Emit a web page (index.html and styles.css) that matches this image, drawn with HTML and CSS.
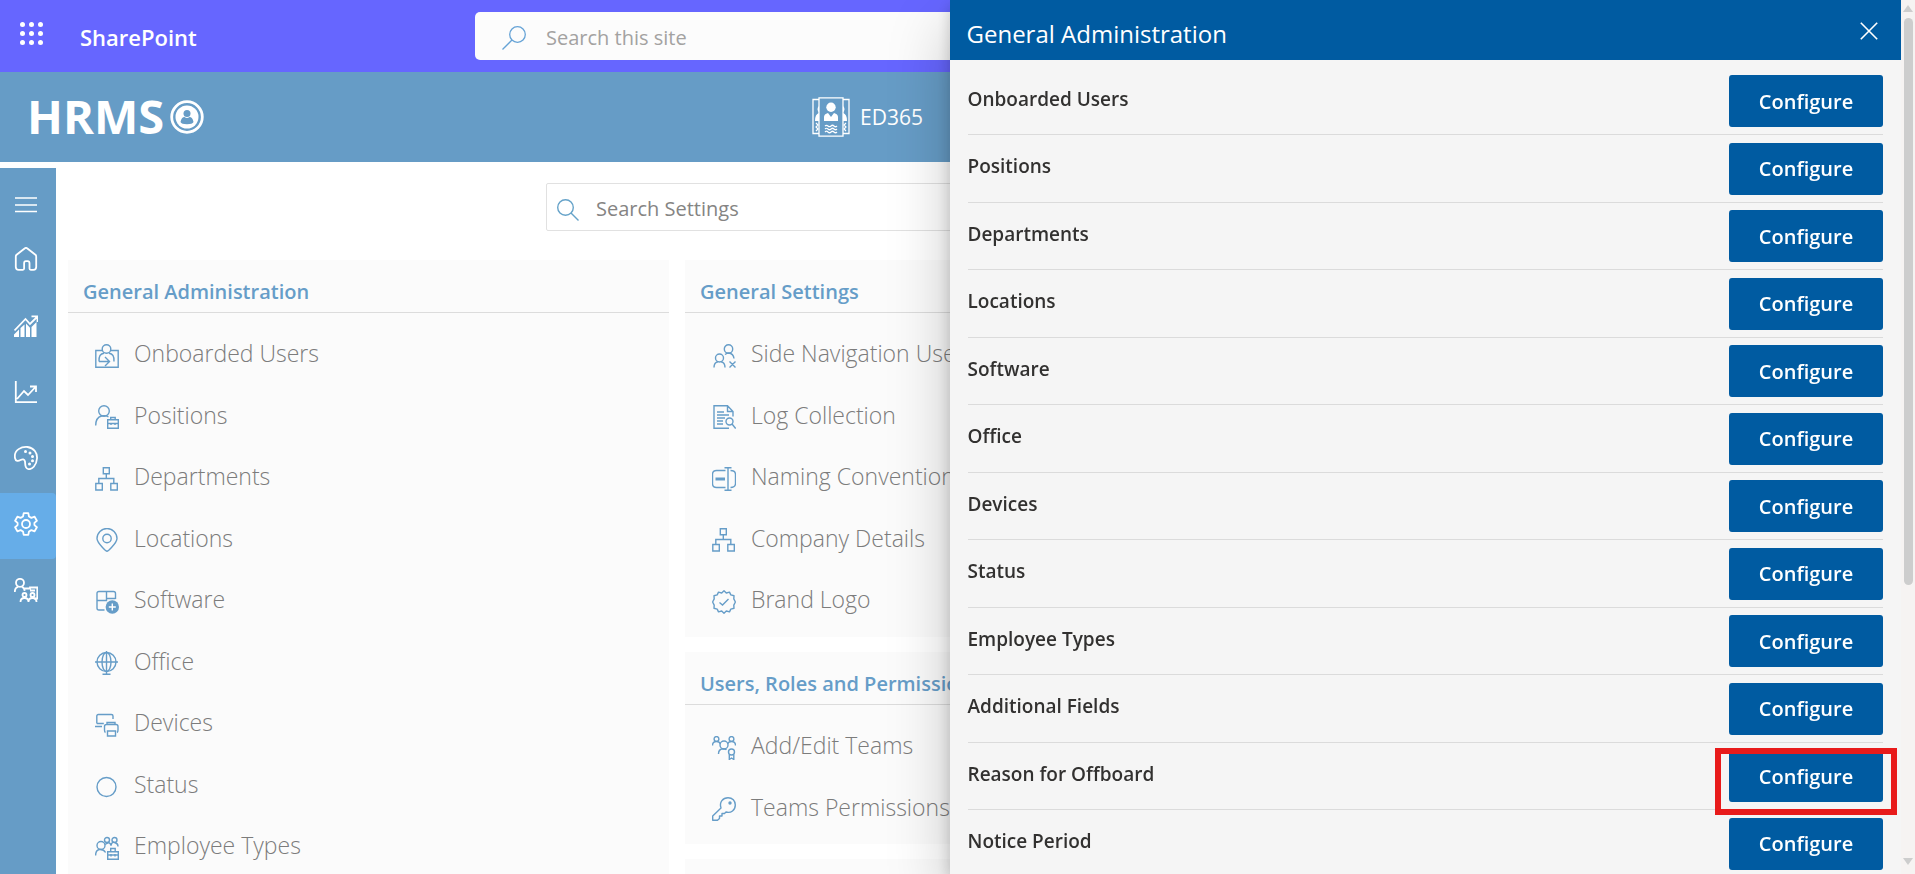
FILE: index.html
```html
<!DOCTYPE html>
<html lang="en">
<head>
<meta charset="utf-8">
<title>HRMS - Settings</title>
<link rel="stylesheet" href="styles.css">
</head>
<body>
<div class="page">
  <header class="suite-bar">
    <button class="waffle" aria-label="App launcher">
      <svg viewBox="0 0 24 24" width="24" height="24" fill="currentColor"><circle cx="2.5" cy="2.5" r="2.5"/><circle cx="11.5" cy="2.5" r="2.5"/><circle cx="20.5" cy="2.5" r="2.5"/><circle cx="2.5" cy="11.5" r="2.5"/><circle cx="11.5" cy="11.5" r="2.5"/><circle cx="20.5" cy="11.5" r="2.5"/><circle cx="2.5" cy="20.5" r="2.5"/><circle cx="11.5" cy="20.5" r="2.5"/><circle cx="20.5" cy="20.5" r="2.5"/></svg>
    </button>
    <a class="suite-name" href="#">SharePoint</a>
    <label class="suite-search">
      <svg viewBox="0 0 24 24" width="24" height="24" fill="none" stroke="currentColor" stroke-width="1.3"><circle cx="15.5" cy="8.5" r="7.8"/><path d="M10 14 .5 23.500"/></svg>
      <input type="text" placeholder="Search this site" aria-label="Search this site">
    </label>
  </header>

  <div class="app-bar">
    <a class="brand" href="#"><span>HRMS</span>
      <svg viewBox="0 0 34 34" width="34" height="34"><circle cx="17" cy="17" r="15.3" fill="none" stroke="#fff" stroke-width="2.8"/><circle cx="17" cy="17" r="11.5" fill="#fff"/><circle cx="17" cy="13.5" r="3.5" fill="#669cc6"/><path d="M10.500 22q1-5 4-5 2.500 1.800 5 0 3 0 4 5-1 2.200-6.500 2.200T10.500 22z" fill="#669cc6"/></svg>
    </a>
    <a class="app-link" href="#">
      <svg viewBox="0 0 38 40" width="38" height="40" fill="none" stroke="#fff" stroke-width="1.3"><path d="M7 2.500H1v34h6M31 2.500h6v34h-6M7 .8h24v38.400H7z"/><g fill="#fff" stroke="none"><circle cx="19" cy="10.3" r="4.7"/><path d="M12 24v-4q0-3 4-4l3 4 3-4q4 1 4 4v4zM7 9q-3 3 0 6.500zM7 16q-4 1-4 8h4zM31 9q3 3 0 6.500zM31 16q4 1 4 8h-4z"/></g><path d="M13 29q1.500-1.500 3 0t3 0 3 0 3 0M13 32q1.500-1.500 3 0t3 0 3 0 3 0M13 35q1.500-1.500 3 0t3 0 3 0 3 0M4 26l2 2-2 2 2 2-2 2M34 26l-2 2 2 2-2 2 2 2" stroke-width="1.2"/></svg>
      <span>ED365</span>
    </a>
  </div>

  <div class="body">
    <nav class="rail" aria-label="Main">
      <button class="rail-item rail-menu" aria-label="Menu"><svg viewBox="0 0 24 24"><path d="M1 5h22M1 12h22M1 18.500h22" stroke-width="1.3"/></svg></button>
      <button class="rail-item rail-home" aria-label="Home"><svg viewBox="0 0 24 24"><path d="M1.800 9.500q0-1 .8-1.700L10.600 1.500q1.400-1.200 2.800 0l8 6.300q.8.700.8 1.700V20q0 2.800-2.800 2.800h-2.700q-1.200 0-1.200-1.200v-5.400q0-2-1.800-2h-1.800q-1.800 0-1.800 2v5.400q0 1.200-1.200 1.200H4.600Q1.800 22.800 1.800 20z"/></svg></button>
      <button class="rail-item rail-stats" aria-label="Analytics"><svg viewBox="0 0 24 24"><path d="M.5 15.500 11.500 4l4.500 5L23 2M17.500 1.300H23.500V7"/><path d="M0 22v-2.500l5-5V22zM6.500 22v-9L10.500 9.500V22zM12 22V8.500l4 4.200V22zM17.500 22V12L22.500 7v15z" fill="currentColor" stroke="none"/></svg></button>
      <button class="rail-item" aria-label="Reports"><svg viewBox="0 0 24 24"><path d="M1.800 1v21.200H23M3 19l7-8 4 4 7.500-8M16 6.500h6v5.500"/></svg></button>
      <button class="rail-item" aria-label="Theme"><svg viewBox="0 0 24 24"><path d="M1 12C-.5 3.500 8 .5 13.500 1 20 1.800 23.500 7 23 12.500 22.500 19.500 18 24 14 23c-3.500-1-2.500-4.500-3-7.500-.5-2.500-2.500-2.500-4.500-1.500C4.500 15.200 1.500 15.500 1 12z"/><g fill="currentColor" stroke="none"><circle cx="11.5" cy="5.5" r="1.5"/><circle cx="16" cy="7" r="1.5"/><circle cx="18.5" cy="10.5" r="1.5"/><circle cx="18.5" cy="14.8" r="1.5"/><circle cx="15.5" cy="18" r="1.5"/></g></svg></button>
      <button class="rail-item active" aria-label="Settings" aria-current="page"><svg viewBox="0 0 24 24"><circle cx="12" cy="12" r="4"/><path d="M9.700 1.200h4.600l.7 3.300 2.400 1.400 3.200-1.200 2.300 4-2.500 2.200v2.200l2.500 2.200-2.300 4-3.200-1.200-2.400 1.400-.7 3.300H9.700L9 19.500l-2.400-1.400-3.200 1.200-2.300-4 2.500-2.200v-2.200L1.100 8.700l2.300-4 3.200 1.200L9 4.500z" stroke-linejoin="round"/></svg></button>
      <button class="rail-item" aria-label="Teams"><svg viewBox="0 0 24 24"><circle cx="6" cy="4.800" r="4"/><path d="M.8 14q0-4.500 3.500-5.200M7.700 8.800q2.500.7 3 4M10 10.500h6v-1h7.300V20.500h-3M16 12.500h5"/><circle cx="10.5" cy="17" r="2"/><circle cx="18.5" cy="17" r="2"/><path d="M6.500 24q0-4 4-4t4 4q0-4 4-4t4 4"/></svg></button>
    </nav>

    <main class="main">
      <label class="settings-search">
        <svg viewBox="0 0 22 22" width="22" height="22" fill="none" stroke="currentColor" stroke-width="1.4"><circle cx="8.5" cy="8.5" r="7.8"/><path d="m14 14 7.500 7.500"/></svg>
        <input type="text" placeholder="Search Settings" aria-label="Search Settings">
      </label>
      <div class="columns">
        <div class="column">
          <section class="card">
            <h2>General Administration</h2>
            <ul>
              <li><a href="#"><svg viewBox="0 0 24 24"><path d="M7 6.500H.8v16.800h22.400V6.500H16"/><circle cx="11.5" cy="5" r="4.3"/><path d="M4 17.500q-.5-7.800 5-8.300M14 9.200q5.500.5 5 8.300M4 17.500h9.500M10 13l4.500 4.500L10 22"/></svg>Onboarded Users</a></li>
              <li><a href="#"><svg viewBox="0 0 24 24"><circle cx="9" cy="6" r="5.3"/><path d="M.7 20.500Q.7 12.500 6.500 11q4-1 7 1M12.700 14.700h10.600v8.600H12.700zM15.700 14.500v-2h4.500v2M12.700 18.500h10.600M16 18v2M20 18v2"/></svg>Positions</a></li>
              <li><a href="#"><svg viewBox="0 0 24 24"><path d="M8.300.8h6v6h-6zM.8 16.500h6.500v6.500H.8zM15.800 16.500h6.500v6.500h-6.500zM11.300 7v4.500M3.800 16.500v-5h15v5"/></svg>Departments</a></li>
              <li><a href="#"><svg viewBox="0 0 24 24"><path d="M12 23.300q-1 0-4.500-3.800C4 15.700 2 13.500 2 10.500a10 10 0 0 1 20 0c0 3-2 5.200-5.500 9Q13 23.300 12 23.300z"/><circle cx="12" cy="10.5" r="4.2"/></svg>Locations</a></li>
              <li><a href="#"><svg viewBox="0 0 24 24"><path d="M9.500 20H4q-2 0-2-2V3.500q0-2 2-2h14.500q2 0 2 2V9M2 10.500h9.500V1.500M11.500 8.500h9"/><circle cx="17.3" cy="17" r="6.7" fill="currentColor" stroke="none"/><path d="M17.300 13.500v7M13.800 17h7" stroke="#fff"/></svg>Software</a></li>
              <li><a href="#"><svg viewBox="0 0 24 24"><circle cx="11.5" cy="11" r="9.5"/><ellipse cx="11.5" cy="11" rx="4.5" ry="9.5"/><path d="M0 11h23M11.500 0v23.200M7.500 23.200h8"/></svg>Office</a></li>
              <li><a href="#"><svg viewBox="0 0 24 24"><path d="M1.800 10.500V3q0-1.500 1.500-1.500h13Q18 1.500 18 3v3M0 13.500h7M12 11V9.500h8V11M10.500 19.500Q9.500 19 9.500 17v-3.500q0-2 2-2h9.500q2 0 2 2V17q0 2-1 2.500M12.500 18h8v5h-8zM1.800 10.500h7"/></svg>Devices</a></li>
              <li><a href="#"><svg viewBox="0 0 24 24"><circle cx="11.5" cy="13" r="9.5"/></svg>Status</a></li>
              <li><a href="#"><svg viewBox="0 0 24 24"><circle cx="6" cy="9.500" r="4"/><path d="M.6 19.500q0-5.500 4-6 4-.5 6 3"/><circle cx="12" cy="4" r="2.5"/><circle cx="19.5" cy="4" r="2.5"/><path d="M10 8.500q5-4 6 1 1-5 4.500-2.500 2.500.5 2.500 3.500M12.700 15.700h10.600v7.600H12.700zM15.700 15.500v-3h4.500v3M12.700 19h10.600M16 18v2.500M20 18v2.500"/></svg>Employee Types</a></li>
            </ul>
          </section>
        </div>
        <div class="column">
          <section class="card">
            <h2>General Settings</h2>
            <ul>
              <li><a href="#"><svg viewBox="0 0 24 24"><circle cx="16.5" cy="5" r="4.2"/><circle cx="7.5" cy="14" r="4"/><path d="M2 23.500q0-5 4-5.700M9 17.800q4 .7 4 5.700M13 10.500q2-1.500 3.500-1.500 5 .5 5.500 5.500M17.500 17.500l6 6M23.500 17.500l-6 6"/></svg>Side Navigation Users</a></li>
              <li><a href="#"><svg viewBox="0 0 24 24"><path d="M21 11.500V6.500L15.500.8H2v22.500h15M15.500.8v5.700H21M5 7h7M5 10h12M5 13h8M5 16h6M5 19h6"/><circle cx="17.5" cy="16.5" r="3.5"/><path d="m20 19 3.700 4.500"/></svg>Log Collection</a></li>
              <li><a href="#"><svg viewBox="0 0 24 24"><path d="M13.500 3.500H4.500q-4 0-4 4v9q0 4 4 4h9M18.500 3.500q5 0 5 4v9q0 4-5 4M12.500.8h7M12.500 23.300h7M16 .8v22.500"/><path d="M3.500 12h9.500" stroke-width="3"/></svg>Naming Convention</a></li>
              <li><a href="#"><svg viewBox="0 0 24 24"><path d="M8.300.8h6v6h-6zM.8 16.500h6.500v6.500H.8zM15.800 16.500h6.500v6.500h-6.500zM11.300 7v4.500M3.800 16.500v-5h15v5"/></svg>Company Details</a></li>
              <li><a href="#"><svg viewBox="0 0 24 24"><path d="M12 .8l2.300 2.200 3.200-.9 1.300 2.800 3.200.8-.2 3.200L23.400 12l-1.600 3.100.2 3.200-3.200.8-1.300 2.800-3.200-.9L12 23.200 9.700 21l-3.200.9-1.300-2.800-3.200-.8.2-3.200L.6 12l1.600-3.100L2 5.700l3.200-.8 1.300-2.800 3.200.9z" stroke-linejoin="round"/><path d="m7.500 12.500 3 2.500 6-6"/></svg>Brand Logo</a></li>
            </ul>
          </section>
          <section class="card">
            <h2>Users, Roles and Permissions</h2>
            <ul>
              <li><a href="#"><svg viewBox="0 0 24 24"><circle cx="4.5" cy="3" r="2.4"/><circle cx="19.5" cy="3" r="2.4"/><circle cx="12" cy="9" r="4"/><path d="M.5 9.500q0-4 4-4 3 0 4 2.500M15.500 8q1-2.500 4-2.500 4 0 4 4M6.500 18q0-4.500 4-5.200 3 0 4 1"/><circle cx="19.5" cy="16" r="3"/><path d="M17.300 18.500v5l2.200-1.500 2.300 1.500v-5"/></svg>Add/Edit Teams</a></li>
              <li><a href="#"><svg viewBox="0 0 24 24"><path d="M9 11C7 5 11 .7 16 .7c4.500 0 7.300 3.300 7.300 7.300 0 5-4.300 8.500-9.300 7l-1.500 1.500H10V19H7.500v2.500L5.500 23.300H.7V19z" stroke-linejoin="round"/><circle cx="18" cy="6" r="1" fill="currentColor"/></svg>Teams Permissions</a></li>
            </ul>
          </section>
          <section class="card card-next"></section>
        </div>
        <div class="column"></div>
      </div>
    </main>
  </div>
</div>

<div class="layer">
  <aside class="panel" role="dialog" aria-labelledby="panel-title">
    <header class="panel-head">
      <h1 id="panel-title">General Administration</h1>
      <button class="close" aria-label="Close"><svg viewBox="0 0 18 18" width="18" height="18" fill="none" stroke="currentColor" stroke-width="1.6"><path d="m.8.8 16.400 16.400M17.200.8.800 17.200"/></svg></button>
    </header>
    <ul class="panel-list">
      <li><span>Onboarded Users</span><button>Configure</button></li>
      <li><span>Positions</span><button>Configure</button></li>
      <li><span>Departments</span><button>Configure</button></li>
      <li><span>Locations</span><button>Configure</button></li>
      <li><span>Software</span><button>Configure</button></li>
      <li><span>Office</span><button>Configure</button></li>
      <li><span>Devices</span><button>Configure</button></li>
      <li><span>Status</span><button>Configure</button></li>
      <li><span>Employee Types</span><button>Configure</button></li>
      <li><span>Additional Fields</span><button>Configure</button></li>
      <li class="marked"><span>Reason for Offboard</span><button>Configure</button></li>
      <li><span>Notice Period</span><button>Configure</button></li>
    </ul>
  </aside>
  <div class="scrollbar" aria-hidden="true">
    <svg viewBox="0 0 10 7" width="10" height="7"><path d="M5 0 10 7H0z"/></svg>
    <div class="track"><div class="thumb"></div></div>
    <svg viewBox="0 0 10 7" width="10" height="7"><path d="M0 0h10L5 7z"/></svg>
  </div>
</div>
</body>
</html>
```

FILE: styles.css
```css
*, *::after { box-sizing: border-box; }
body {
  margin: 0;
  height: 100vh;
  overflow: hidden;
  background: #fff;
  font-family: "Open Sans", "Noto Sans", sans-serif;
}
button, input { font: inherit; }
button { border: 0; padding: 0; background: none; color: inherit; }
a { color: inherit; text-decoration: none; }
ul { list-style: none; margin: 0; padding: 0; }
h1, h2 { margin: 0; }
svg { flex: none; display: block; }

.page {
  height: 100vh;
  display: flex;
  flex-direction: column;
  overflow: hidden;
}

/* suite bar */
.suite-bar {
  flex: none;
  height: 72px;
  display: grid;
  grid-template-columns: 60px 395px 1fr 395px;
  align-items: center;
  padding-left: 20px;
  background: #66f;
  color: #fff;
}
.waffle { width: 24px; margin-bottom: 4px; }
.suite-name { padding-top: 2px; font-size: 22px; font-weight: 600; }
.suite-search {
  height: 48px;
  display: flex;
  align-items: center;
  gap: 20px;
  padding: 0 27px;
  background: #fcfcfc;
  border-radius: 5px;
  color: #66a3d6;
}
.suite-search svg { margin-top: 4px; }
input {
  flex: 1;
  min-width: 0;
  border: 0;
  padding: 2px 0 0;
  outline: 0;
  background: none;
  font-size: 20px;
}
.suite-search input::placeholder { color: #a3a2a1; }

/* application bar */
.app-bar {
  flex: none;
  height: 90px;
  display: flex;
  align-items: center;
  justify-content: space-between;
  padding: 0 992px 0 27px;
  background: #669cc6;
  color: #fff;
}
.brand { display: flex; align-items: center; gap: 6px; font-size: 47px; font-weight: 700; line-height: 60px; }
.brand span { padding-bottom: 2px; }
.app-link { display: flex; align-items: center; gap: 10px; font-size: 21px; white-space: nowrap; }

.body { flex: 1; min-height: 0; display: flex; margin-top: 6px; }

/* icon rail */
.rail { flex: none; width: 56px; background: #669cc6; color: #fff; }
.rail-item {
  width: 100%;
  height: 66px;
  display: flex;
  align-items: center;
  padding: 0 0 4px 14px;
}
.rail-item svg { width: 24px; height: 24px; fill: none; stroke: currentColor; stroke-width: 1.8; }
.rail-menu { height: 73px; padding-bottom: 0; }
.rail-home { height: 52px; padding-bottom: 16px; }
.rail-stats { height: 68px; padding-bottom: 0; }
.active { background: #66ade8; border-radius: 0 4px 4px 0; }

/* settings */
.main { flex: 1; min-width: 0; padding: 15px 12px 0; }
.settings-search {
  width: 50%;
  height: 48px;
  display: flex;
  align-items: center;
  gap: 17px;
  margin: 0 auto 29px 478px;
  padding: 0 10px;
  border: 1px solid #e1e1e1;
  border-radius: 2px;
  color: #66a3c9;
}
.settings-search svg { margin-top: 6px; }
.settings-search input::placeholder { color: #858483; }
.columns { display: grid; grid-template-columns: repeat(3, minmax(0, 1fr)); gap: 16px; }
.column { display: flex; flex-direction: column; gap: 15px; }
.card { padding-bottom: 8px; background: #fbfbfb; }
.card-next { min-height: 120px; }
.card h2 {
  height: 53px;
  padding: 10px 15px 0;
  border-bottom: 1px solid #dcdcdc;
  color: #669dc8;
  font-size: 20px;
  font-weight: 600;
  line-height: 44px;
}
.card ul { padding-top: 8px; }
.card li { height: 61px; }
.card li:nth-child(odd) { height: 62px; }
.card li a {
  height: 100%;
  display: flex;
  align-items: center;
  gap: 15px;
  padding: 2px 0 0 27px;
  color: #7c7c7c;
  font-size: 23px;
  font-weight: 300;
  white-space: nowrap;
}
.card svg {
  width: 24px;
  height: 24px;
  margin-top: 5px;
  fill: none;
  stroke: currentColor;
  stroke-width: 1.4;
  color: #669dc8;
}

/* side panel */
.layer {
  position: fixed;
  inset: 0;
  display: flex;
  justify-content: flex-end;
  overflow: hidden;
}
.panel {
  width: calc(50% - 6px);
  background: #f5f5f5;
  box-shadow: 0 26px 58px rgba(0, 0, 0, .22), 0 5px 14px rgba(0, 0, 0, .18);
}
.panel-head {
  height: 60px;
  display: flex;
  align-items: center;
  justify-content: space-between;
  padding: 6px 23px 0 17px;
  background: #005ba1;
  color: #fff;
}
.panel-head h1 { font-size: 24px; font-weight: 400; }
.close { padding-bottom: 4px; }
.panel-list { padding: 8px 18px 0; }
.panel-list li {
  position: relative;
  height: 67px;
  display: flex;
  align-items: center;
  justify-content: space-between;
  border-bottom: 1px solid #dbdbdb;
}
.panel-list li:nth-child(even) { height: 68px; }
.panel-list span { padding-bottom: 5px; color: #323130; font-size: 19px; font-weight: 600; }
.panel-list button {
  width: 154px;
  height: 52px;
  border-radius: 3px;
  background: #005ba1;
  color: #fff;
  font-size: 20px;
  font-weight: 600;
}
.marked::after {
  content: "";
  position: absolute;
  top: 5px;
  right: -14px;
  width: 182px;
  height: 67px;
  border: 6px solid #e81b1b;
}
.scrollbar {
  flex: none;
  width: 14px;
  display: flex;
  flex-direction: column;
  align-items: center;
  gap: 6px;
  padding: 5px 0 9px;
  background: #f6f3f2;
  fill: #cdcdcd;
}
.track { flex: 1; width: 9px; }
.thumb { height: 68%; border-radius: 5px; background: #cdcdcd; }
```
